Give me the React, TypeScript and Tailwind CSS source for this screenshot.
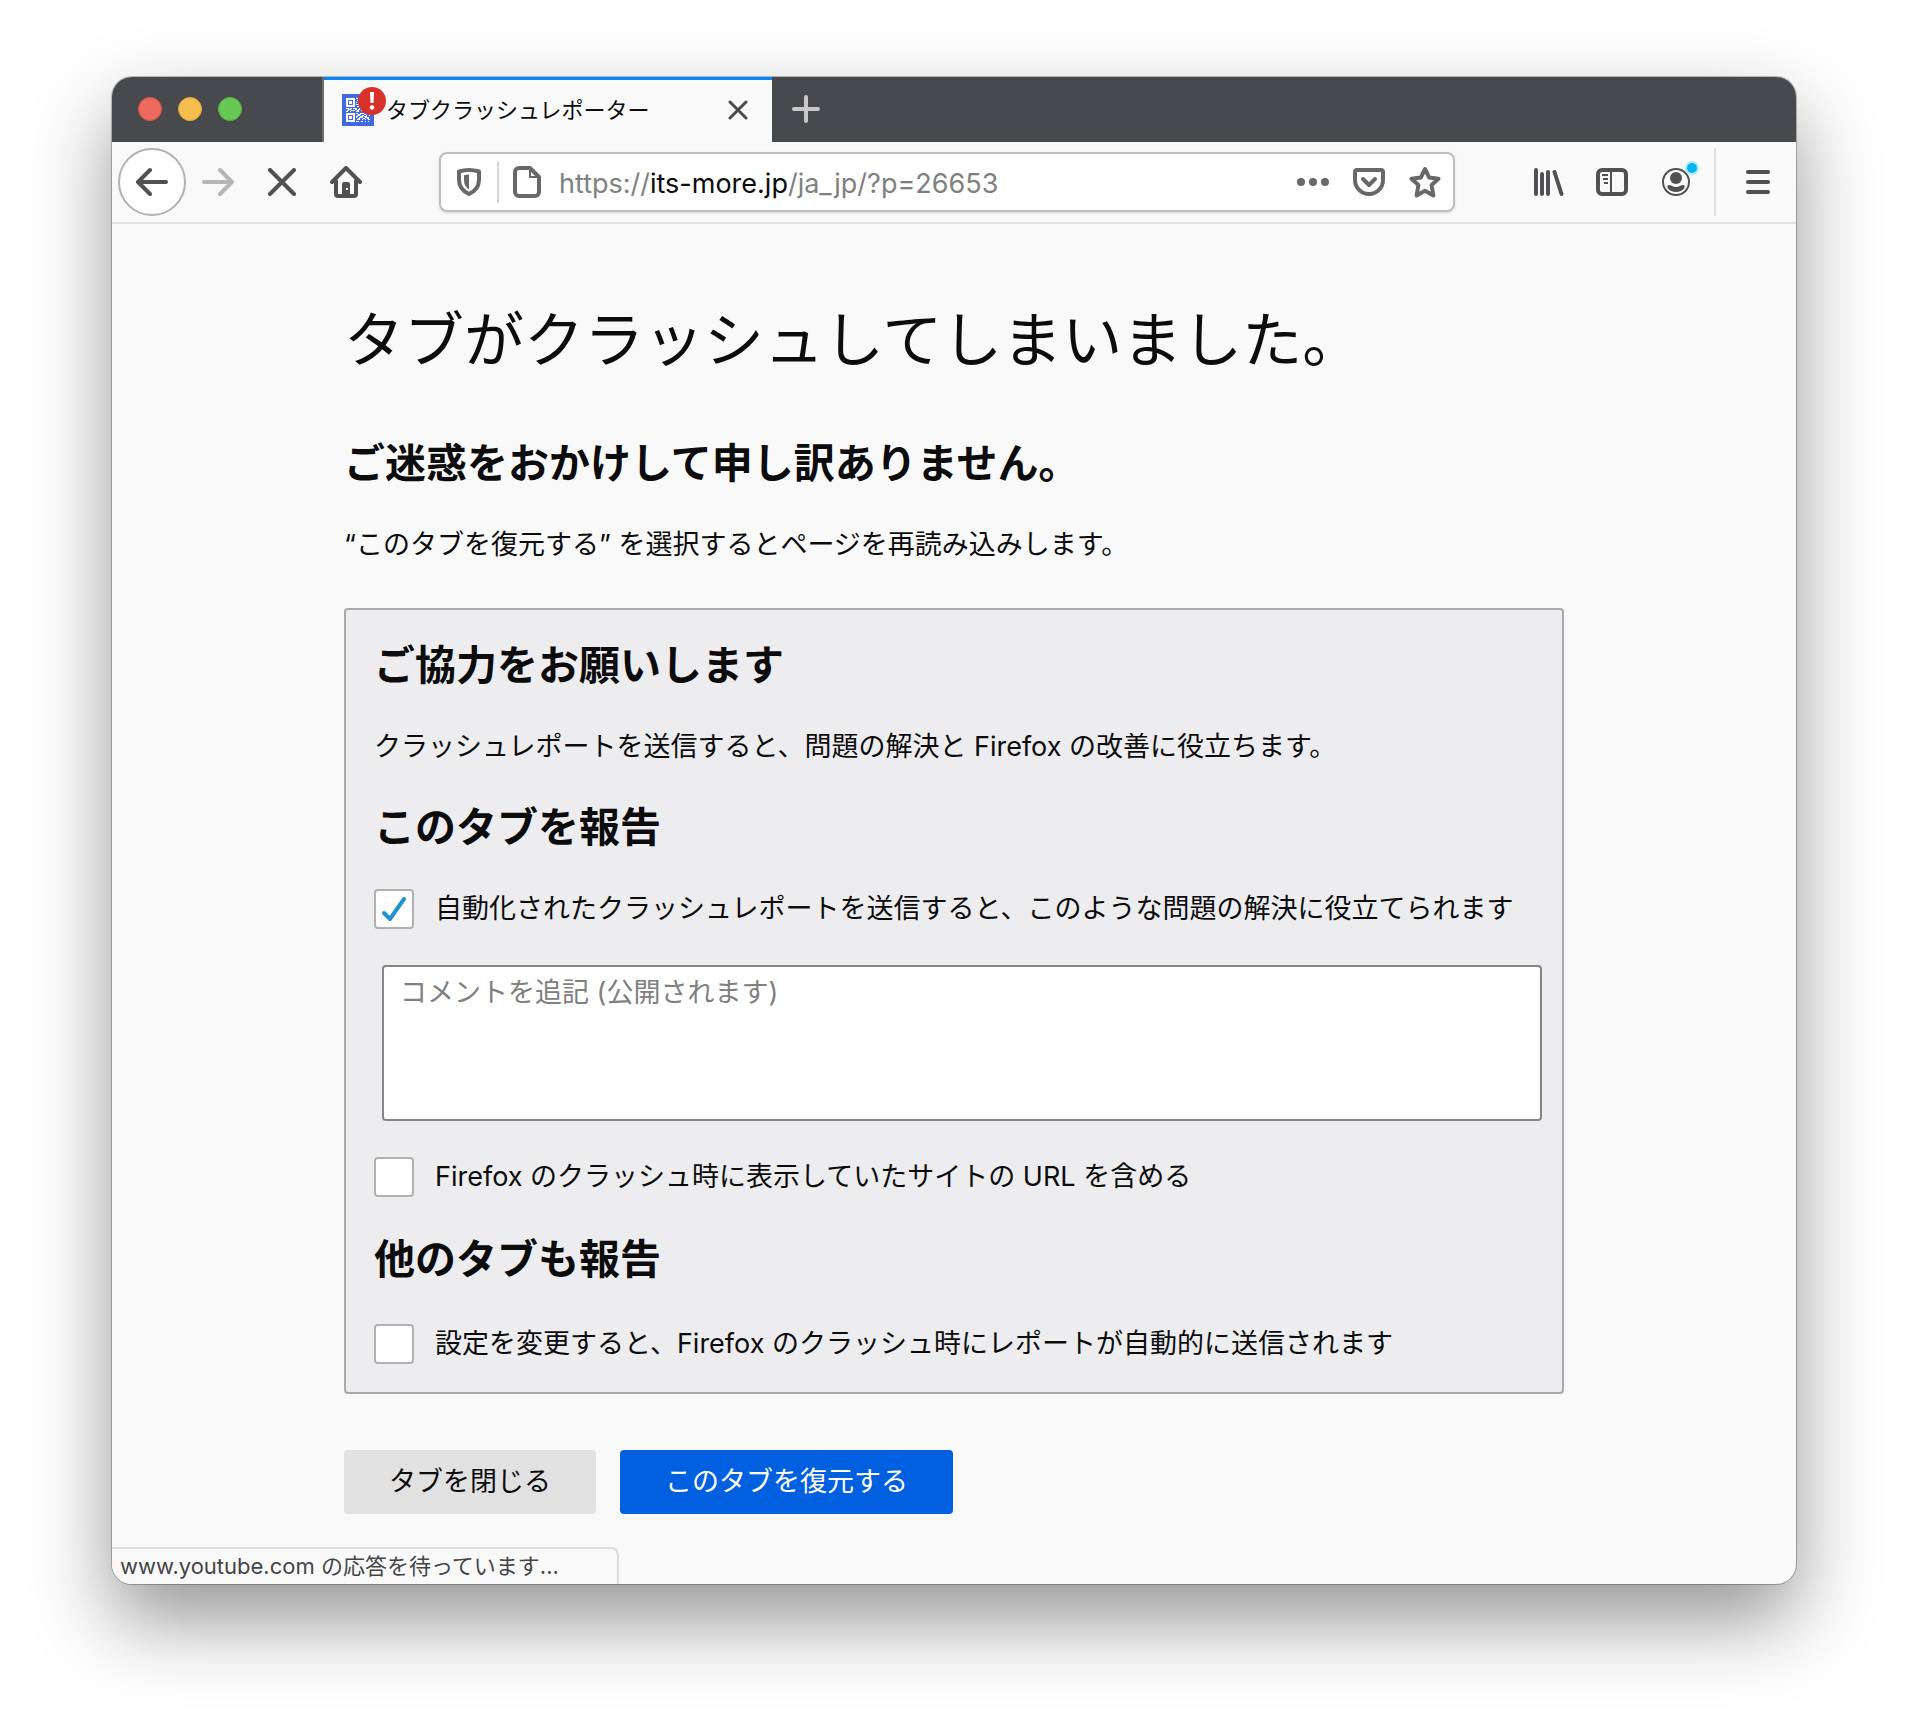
import type { ReactNode } from "react";

const svgProps = { fill: "none", "aria-hidden": true } as const;

const QrIcon = () => (
  <svg {...svgProps} width="32" height="32" viewBox="0 0 32 32" shapeRendering="crispEdges">
    <path fill="#4169e1" d="M0 0h32v32H0z" />
    <path
      fill="#fff"
      fillRule="evenodd"
      d="M4 4h9v9H4zM6 6v5h5V6zM4 19h9v9H4zM6 21v5h5v-5zM19 4h9v9h-9zM21 6v5h5V6zM7 7h3v3h-3zM7 22h3v3h-3z"
    />
    <path
      stroke="#fff"
      strokeWidth="1"
      d="M14 4.500h2M15 6.500h3M14 8.500h1M17 8.500h1M14 10.500h3M15 12.500h2M4 14.500h3M8 14.500h2M11 14.500h4M17 14.500h3M22 14.500h3M26 14.500h2M6 15.500h3M13 15.500h2M16 15.500h2M20 15.500h2M24 15.500h3M5 16.500h2M9 16.500h4M15 16.500h2M19 16.500h4M25 16.500h2M4 17.500h2M8 17.500h1M14 17.500h3M21 17.500h2M14 19.500h2M18 19.500h4M24 19.500h3M16 20.500h3M22 20.500h2M27 20.500h1M15 21.500h3M20 21.500h2M24 21.500h1M27 21.500h1M14 22.500h2M18 22.500h3M22 22.500h3M14 23.500h1M17 23.500h4M23 23.500h4M16 24.500h2M21 24.500h2M25 24.500h2M15 25.500h3M20 25.500h1M23 25.500h1M26 25.500h2M14 27.500h3M19 27.500h2M23 27.500h1M26 27.500h1"
    />
  </svg>
);

const BackIcon = () => (
  <svg {...svgProps} width="32" height="32" viewBox="0 0 32 32" stroke="currentColor" strokeWidth="4" strokeLinecap="round" strokeLinejoin="round">
    <path d="M30 16H3M14 4 2 16l12 12" />
  </svg>
);

const ForwardIcon = () => (
  <svg {...svgProps} width="32" height="32" viewBox="0 0 32 32" stroke="currentColor" strokeWidth="4" strokeLinecap="round" strokeLinejoin="round">
    <path d="M2 16h27M18 4l12 12-12 12" />
  </svg>
);

const CrossIcon = ({ size, weight }: { size: number; weight: number }) => (
  <svg {...svgProps} width={size} height={size} viewBox={`0 0 ${size} ${size}`} stroke="currentColor" strokeWidth={weight} strokeLinecap="round">
    <path d={`M2 2 ${size - 2} ${size - 2}M${size - 2} 2 2 ${size - 2}`} />
  </svg>
);

const HomeIcon = () => (
  <svg {...svgProps} width="32" height="32" viewBox="0 0 32 32">
    <path stroke="currentColor" strokeWidth="4" strokeLinecap="round" strokeLinejoin="round" d="M2 16 16 2l14 14M6 15v13a2 2 0 0 0 2 2h16a2 2 0 0 0 2-2V15" />
    <path fill="currentColor" fillRule="evenodd" d="M12 31V18a2 2 0 0 1 2-2h4a2 2 0 0 1 2 2v13zM16 22v2h2v-2z" />
  </svg>
);

const ShieldIcon = () => (
  <svg {...svgProps} width="26" height="30" viewBox="0 0 26 30">
    <path stroke="currentColor" strokeWidth="4" strokeLinejoin="round" d="M13 3c3.500 0 7 .6 10 1.500V13c0 6-3.500 11-10 14C6.500 24 3 19 3 13V4.500C6 3.600 9.500 3 13 3z" />
    <path fill="currentColor" d="M13 7.500v15C9.500 20.500 8 17 8 13V8.200c1.600-.4 3.300-.6 5-.7z" />
  </svg>
);

const PageIcon = () => (
  <svg {...svgProps} width="28" height="32" viewBox="0 0 28 32">
    <path stroke="currentColor" strokeWidth="4" strokeLinejoin="round" d="M17 2H6a4 4 0 0 0-4 4v20a4 4 0 0 0 4 4h16a4 4 0 0 0 4-4V11z" />
    <path stroke="currentColor" strokeWidth="2" d="M17 2v9h9" />
  </svg>
);

const PocketIcon = () => (
  <svg {...svgProps} width="32" height="28" viewBox="0 0 32 28" stroke="currentColor" strokeWidth="4" strokeLinecap="round" strokeLinejoin="round">
    <path d="M4 2h24a2 2 0 0 1 2 2v8a14 14 0 0 1-28 0V4a2 2 0 0 1 2-2z" />
    <path d="m10 11 6 6 6-6" />
  </svg>
);

const StarIcon = () => (
  <svg {...svgProps} width="32" height="32" viewBox="0 0 32 32" stroke="currentColor" strokeWidth="4" strokeLinejoin="round">
    <path d="m16 3 4.200 8.600 9.300 1.200-6.900 6.300 1.800 10.400L16 24.700l-8.400 4.800 1.800-10.400-6.900-6.300 9.300-1.200z" />
  </svg>
);

const LibraryIcon = () => (
  <svg {...svgProps} width="32" height="30" viewBox="-1 0 32 30" stroke="currentColor" strokeWidth="4" strokeLinecap="round">
    <path d="M3 3v24M9 7v20M15 5v22M21.500 5l7 22" />
  </svg>
);

const SidebarIcon = () => (
  <svg {...svgProps} width="32" height="28" viewBox="0 0 32 28">
    <rect x="2" y="2" width="28" height="24" rx="4" stroke="currentColor" strokeWidth="4" />
    <path stroke="currentColor" strokeWidth="2" d="M15 2v24M6 7h6M7 11h5M8 15h4" />
  </svg>
);

const AccountIcon = () => (
  <svg {...svgProps} width="28" height="28" viewBox="0 0 28 28">
    <circle cx="14" cy="14" r="13" stroke="currentColor" strokeWidth="2" />
    <circle cx="14" cy="10" r="6" fill="currentColor" />
    <path fill="currentColor" d="M7 17c2 0 4 2 7 2s5-2 7-2 2 2 1 3.500C20.500 22.800 17.500 24 14 24s-6.500-1.200-8-3.500C5 19 5 17 7 17z" />
  </svg>
);

const ToolButton = ({ label, children }: { label: string; children: ReactNode }) => (
  <button type="button" aria-label={label} className="flex h-16 w-16 shrink-0 items-center justify-center">
    {children}
  </button>
);

type CheckRowProps = { id: string; label: string; defaultChecked?: boolean };

const CheckRow = ({ id, label, defaultChecked }: CheckRowProps) => (
  <div className="flex items-center gap-[21px]">
    <span className="relative h-10 w-10 shrink-0">
      <input
        id={id}
        type="checkbox"
        defaultChecked={defaultChecked}
        className="peer block h-10 w-10 appearance-none rounded border-2 border-[#b1b1b1] bg-white"
      />
      <svg
        {...svgProps}
        viewBox="0 0 40 40"
        className="pointer-events-none absolute inset-0 hidden h-10 w-10 peer-checked:block"
      >
        <path stroke="#2292d0" strokeWidth="4" strokeLinecap="round" strokeLinejoin="round" d="m10 24 6 6 14-20" />
      </svg>
    </span>
    <label htmlFor={id}>{label}</label>
  </div>
);

const TabStrip = () => (
  <div className="flex h-[65px] bg-[#48494c]">
    <div className="flex w-[212px] shrink-0 items-center gap-4 border-r-2 border-[#6c6c6e] pb-px pl-[26px]">
      <button type="button" aria-label="閉じる" className="h-6 w-6 rounded-full border border-[#d9534a] bg-[#ec6a5e]" />
      <button type="button" aria-label="しまう" className="h-6 w-6 rounded-full border border-[#dba73d] bg-[#f4bf4f]" />
      <button type="button" aria-label="拡大" className="h-6 w-6 rounded-full border border-[#57b345] bg-[#66c956]" />
    </div>
    <div className="flex w-[448px] items-center border-t-3 border-[#0a84ff] bg-[#f9f9fa] pb-[2px] pl-[18px] pr-6">
      <span className="relative mr-3">
        <QrIcon />
        <span className="absolute -right-3 -top-[7px] flex h-7 w-7 items-center justify-center rounded-full bg-[#d7322a]">
          <svg {...svgProps} width="6" height="18" viewBox="0 0 6 18">
            <path fill="#fff" d="M1 0h4l-.5 11h-3z" />
            <circle cx="3" cy="15.500" r="2.200" fill="#fff" />
          </svg>
        </span>
      </span>
      <span className="flex-1 truncate text-[22px] text-[#0c0c0d]">タブクラッシュレポーター</span>
      <button type="button" aria-label="タブを閉じる" className="text-[#4a4a4c]">
        <CrossIcon size={20} weight={3} />
      </button>
    </div>
    <button type="button" aria-label="新しいタブ" className="ml-5 pb-px text-[#c8c8c9]">
      <svg {...svgProps} width="28" height="28" viewBox="0 0 28 28" stroke="currentColor" strokeWidth="4" strokeLinecap="round">
        <path d="M14 2v24M2 14h24" />
      </svg>
    </button>
  </div>
);

const Toolbar = () => (
  <div className="flex h-[82px] items-center border-b-2 border-[#e0e0e1] pl-[6px] text-[#515153]">
    <button
      type="button"
      aria-label="戻る"
      className="flex h-[68px] w-[68px] shrink-0 items-center justify-center rounded-full border-2 border-[#b1b1b1] bg-white"
    >
      <BackIcon />
    </button>
    <span className="flex text-[#b6b6b7]">
      <ToolButton label="進む"><ForwardIcon /></ToolButton>
    </span>
    <ToolButton label="中止"><CrossIcon size={28} weight={4} /></ToolButton>
    <ToolButton label="ホーム"><HomeIcon /></ToolButton>

    <div className="ml-[61px] flex h-[60px] flex-1 items-center rounded-lg border-2 border-[#bebebf] bg-white pl-[15px] pr-3 text-[#68686a] shadow-sm">
      <ShieldIcon />
      <span className="ml-[15px] mr-[14px] h-[42px] w-[2px] bg-[#d7d7db]" />
      <PageIcon />
      <div className="ml-[18px] flex-1 pt-1 font-[Inter] text-[27px] leading-8 text-[#808081]">
        https://<span className="text-[#0c0c0d]">its-more.jp</span>/ja_jp/?p=26653
      </div>
      <div className="flex items-center gap-6">
        <button type="button" aria-label="ページ操作">
          <svg {...svgProps} width="32" height="8" viewBox="0 0 32 8">
            <circle cx="4" cy="4" r="4" fill="currentColor" />
            <circle cx="16" cy="4" r="4" fill="currentColor" />
            <circle cx="28" cy="4" r="4" fill="currentColor" />
          </svg>
        </button>
        <button type="button" aria-label="Pocket に保存"><PocketIcon /></button>
        <button type="button" aria-label="ブックマーク"><StarIcon /></button>
      </div>
    </div>

    <div className="ml-[61px] flex">
      <ToolButton label="ライブラリー"><LibraryIcon /></ToolButton>
      <ToolButton label="サイドバー"><SidebarIcon /></ToolButton>
      <ToolButton label="アカウント">
        <span className="relative">
          <AccountIcon />
          <span className="absolute -right-[9px] -top-[7px] h-[14px] w-[14px] rounded-full border-2 border-[#b3eafa] bg-[#00b3f4]" />
        </span>
      </ToolButton>
    </div>
    <span className="ml-[6px] h-[68px] w-[2px] bg-[#e0e0e1]" />
    <button type="button" aria-label="メニュー" className="flex w-20 justify-center pl-1">
      <svg {...svgProps} width="24" height="24" viewBox="0 0 24 24" stroke="currentColor" strokeWidth="4" strokeLinecap="round">
        <path d="M2 2h20M2 12h20M2 22h20" />
      </svg>
    </button>
  </div>
);

const CrashPage = () => (
  <main className="mx-auto w-full max-w-[1220px] pb-[70px] pt-[70px] text-[27px] leading-10 text-[#0c0c0d]">
    <h1 className="text-[60px] font-normal leading-[92px]">タブがクラッシュしてしまいました。</h1>
    <h2 className="mt-[47px] text-[41px] font-bold leading-[60px]">ご迷惑をおかけして申し訳ありません。</h2>
    <p className="mt-8">“このタブを復元する” を選択するとページを再読み込みします。</p>

    <form className="mt-[43px] rounded border-2 border-[#a9a9ab] bg-[#ededf0] px-7 pb-7 pt-[25px]">
      <h2 className="text-[41px] font-bold leading-[60px]">ご協力をお願いします</h2>
      <p className="mt-8">クラッシュレポートを送信すると、問題の解決と Firefox の改善に役立ちます。</p>
      <h2 className="mt-[30px] text-[41px] font-bold leading-[60px]">このタブを報告</h2>
      <div className="mt-8">
        <CheckRow id="send-report" defaultChecked label="自動化されたクラッシュレポートを送信すると、このような問題の解決に役立てられます" />
      </div>
      <textarea
        aria-label="コメント"
        placeholder="コメントを追記 (公開されます)"
        className="ml-2 mr-5 mt-9 block h-[156px] w-[1160px] max-w-full resize-none rounded border-2 border-[#858587] bg-white px-4 py-[6px] placeholder:text-[#808080]"
      />
      <div className="mt-9">
        <CheckRow id="include-url" label="Firefox のクラッシュ時に表示していたサイトの URL を含める" />
      </div>
      <h2 className="mt-8 text-[41px] font-bold leading-[60px]">他のタブも報告</h2>
      <div className="mt-[35px]">
        <CheckRow id="auto-submit" label="設定を変更すると、Firefox のクラッシュ時にレポートが自動的に送信されます" />
      </div>
    </form>

    <div className="mt-14 flex gap-6">
      <button type="button" className="h-16 rounded bg-[#e1e1e2] px-[45px]">タブを閉じる</button>
      <button type="button" className="h-16 rounded bg-[#0060df] px-[45px] text-white">このタブを復元する</button>
    </div>
  </main>
);

export default function App() {
  return (
    <div className="min-h-screen bg-white px-28 pb-[148px] pt-[77px] font-[Inter,'Noto_Sans_CJK_JP',sans-serif]" lang="ja">
      <div className="relative overflow-hidden rounded-[20px] bg-[#f9f9fa] shadow-[0_0_0_1px_rgba(0,0,0,0.25),0_36px_80px_rgba(0,0,0,0.42)]">
        <TabStrip />
        <Toolbar />
        <CrashPage />
        <div className="absolute bottom-0 left-0 w-[507px] rounded-tr-lg border-r-2 border-t-2 border-[#dcdcdd] bg-[#f9f9fa] pl-2 text-[22px] leading-[35px] text-[#444446]">
          www.youtube.com の応答を待っています...
        </div>
      </div>
    </div>
  );
}
